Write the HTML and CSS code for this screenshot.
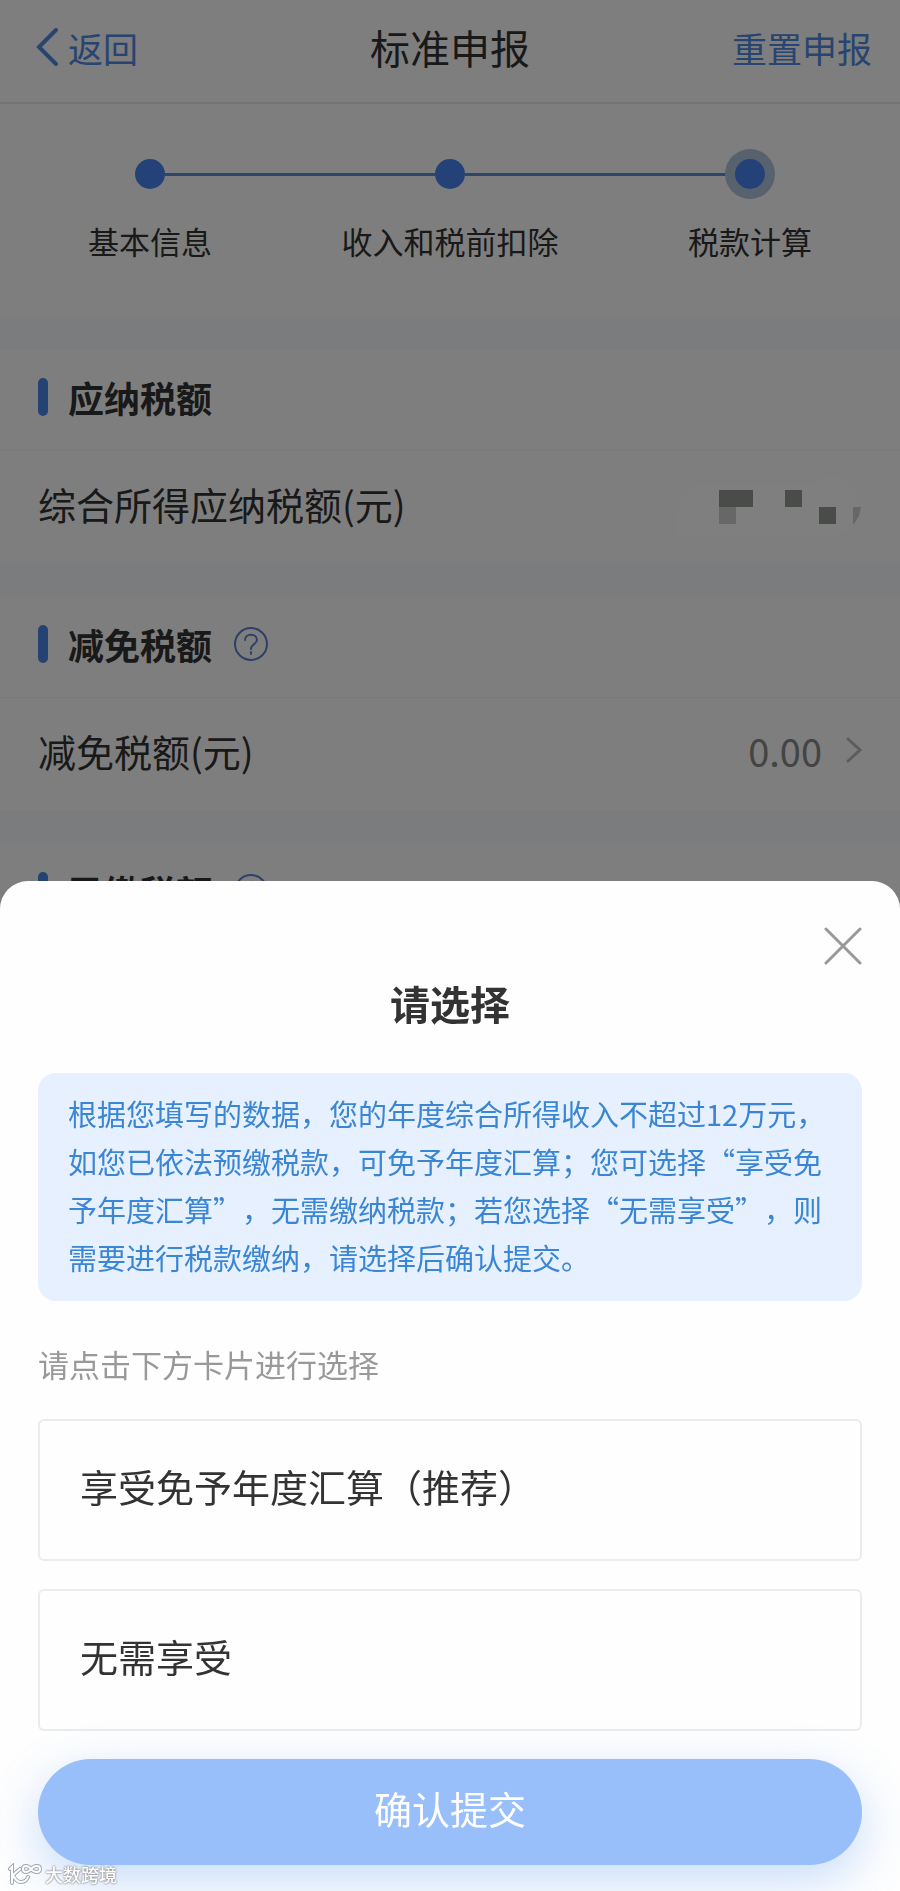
FILE: index.html
```html
<!DOCTYPE html>
<html lang="zh-CN">
<head>
    <meta charset="UTF-8">
    <meta name="viewport" content="width=device-width, initial-scale=1.0">
    <title>标准申报</title>
    <link rel="stylesheet" href="styles.css">
</head>
<body>

    <div class="page">
        <header class="navbar">
            <a class="nav-link" href="#">
                <svg class="back-icon" viewBox="0 0 22 38" aria-hidden="true"><path d="M20 2 L3 19 L20 36"/></svg>
                返回
            </a>
            <h1>标准申报</h1>
            <a class="nav-link nav-right" href="#">重置申报</a>
        </header>

        <ol class="steps">
            <li class="step">
                <div class="track"><i class="line hidden"></i><i class="dot"></i><i class="line"></i></div>
                <span>基本信息</span>
            </li>
            <li class="step">
                <div class="track"><i class="line"></i><i class="dot"></i><i class="line"></i></div>
                <span>收入和税前扣除</span>
            </li>
            <li class="step">
                <div class="track"><i class="line"></i><i class="dot current"></i><i class="line hidden"></i></div>
                <span>税款计算</span>
            </li>
        </ol>

        <section class="panel">
            <h2>应纳税额</h2>
            <div class="row">
                <span>综合所得应纳税额(元)</span>
                <svg class="mosaic" viewBox="0 0 187 74" role="img" aria-label="金额已隐藏">
                    <path class="smudge" d="M6 32 Q14 18 40 18 H140 Q145 10 165 12 Q182 18 182 40 Q178 70 150 70 H0 Z"/>
                    <path class="dark" d="M44 24h34v17h-34z M110 24h17v17h-17z M144 41h17v17h-17z"/>
                    <path class="light" d="M44 41h17v17h-17z M178 41h8l-2 9-5 8h-1z"/>
                </svg>
            </div>
        </section>

        <section class="panel">
            <h2>减免税额
                <button class="help" type="button" aria-label="减免税额说明">
                    <svg viewBox="0 0 34 34"><circle cx="17" cy="17" r="16"/><path d="M11 13 C11 6 23 6 23 13 C23 17 17 17 17 22"/><path d="M17 25 V27"/></svg>
                </button>
            </h2>
            <a class="row" href="#">
                <span>减免税额(元)</span>
                <span class="value">0.00
                    <svg class="arrow" viewBox="0 0 16 26" aria-hidden="true"><path d="M2 2 L14 13 L2 24"/></svg>
                </span>
            </a>
        </section>

        <section class="panel">
            <h2>已缴税额
                <button class="help" type="button" aria-label="已缴税额说明">
                    <svg viewBox="0 0 34 34"><circle cx="17" cy="17" r="16"/><path d="M11 13 C11 6 23 6 23 13 C23 17 17 17 17 22"/><path d="M17 25 V27"/></svg>
                </button>
            </h2>
        </section>
    </div>

    <div class="mask">
        <div class="sheet" role="dialog" aria-labelledby="sheetTitle">
            <button class="close" type="button" aria-label="关闭">
                <svg viewBox="0 0 38 38"><path d="M2 2 L36 36 M36 2 L2 36"/></svg>
            </button>
            <h2 class="sheet-title" id="sheetTitle">请选择</h2>
            <p class="notice">根据您填写的数据，您的年度综合所得收入不超过12万元，如您已依法预缴税款，可免予年度汇算；您可选择“享受免予年度汇算”，无需缴纳税款；若您选择“无需享受”，则需要进行税款缴纳，请选择后确认提交。</p>
            <p class="hint">请点击下方卡片进行选择</p>
            <button class="card" type="button">享受免予年度汇算（推荐）</button>
            <button class="card" type="button">无需享受</button>
            <button class="submit" type="button">确认提交</button>
        </div>
    </div>

    <div class="watermark">
        <svg viewBox="0 0 34 22" aria-hidden="true">
            <path class="edge" d="M2 6 L4 4 V20 M12 6 L5 12 Q8 19 13 19 Q18 19 20 14"/>
            <path class="edge" d="M23 6 C20 2 15 2 15 6 C15 10 20 10 23 6 C26 2 32 2 32 6 C32 10 26 10 23 6"/>
            <path d="M2 6 L4 4 V20 M12 6 L5 12 Q8 19 13 19 Q18 19 20 14"/>
            <path d="M23 6 C20 2 15 2 15 6 C15 10 20 10 23 6 C26 2 32 2 32 6 C32 10 26 10 23 6"/>
        </svg>
        <span>大数跨境</span>
    </div>

</body>
</html>
```
FILE: styles.css
```css
* {
    margin: 0;
    padding: 0;
    box-sizing: border-box;
}

body {
    background: #f4f8fa;
    color: #333;
    font-family: "Noto Sans CJK SC", "Noto Sans", sans-serif;
    font-size: 38px;
    min-height: 100vh;
}

a {
    color: inherit;
    text-decoration: none;
}

button {
    font: inherit;
    color: inherit;
    background: none;
    border: none;
    cursor: pointer;
}

svg {
    display: block;
    fill: none;
    stroke-linecap: round;
}

/* page behind the sheet */
.navbar {
    display: grid;
    grid-template-columns: 1fr auto 1fr;
    align-items: center;
    height: 104px;
    padding-bottom: 8px;
    background: #fdfdfd;
    border-bottom: 2px solid #e6e6e6;
}

.navbar h1 {
    font-size: 40px;
    font-weight: 400;
}

.nav-link {
    display: flex;
    align-items: center;
    gap: 10px;
    padding: 0 28px 0 36px;
    font-size: 35px;
    color: #5088e0;
}

.nav-right {
    justify-self: end;
}

.back-icon {
    width: 22px;
    height: 38px;
    stroke: #5088e0;
    stroke-width: 4;
}

.steps {
    display: grid;
    grid-template-columns: repeat(3, 1fr);
    padding: 46px 0 54px;
    background: #fdfdfd;
    list-style: none;
}

.step {
    text-align: center;
    font-size: 31px;
    line-height: 42px;
}

.track {
    display: flex;
    align-items: center;
    height: 48px;
    margin-bottom: 22px;
}

.line {
    flex: 1;
    height: 3px;
    background: #5c8cdc;
}

.line.hidden {
    background: none;
}

.dot {
    width: 30px;
    height: 30px;
    border-radius: 50%;
    background: #4884ee;
}

.dot.current {
    box-shadow: 0 0 0 10px #b0c4dc;
}

.panel {
    background: #fdfdfd;
    margin-bottom: 34px;
}

.steps + .panel {
    margin-top: 34px;
}

.panel h2 {
    display: flex;
    align-items: center;
    height: 101px;
    padding: 0 38px 6px;
    border-bottom: 1px solid #f2f2f2;
    font-size: 36px;
    font-weight: 700;
}

.panel h2::before {
    content: "";
    width: 10px;
    height: 38px;
    margin-right: 20px;
    border-radius: 5px;
    background: #4a86e4;
}

.help {
    margin-left: 22px;
}

.help svg {
    width: 34px;
    height: 34px;
    stroke: #5c80d0;
    stroke-width: 2;
}

.row {
    display: flex;
    align-items: center;
    justify-content: space-between;
    height: 112px;
    padding: 0 38px 8px;
}

.value {
    display: flex;
    align-items: center;
    gap: 24px;
    color: #888;
}

.arrow {
    width: 16px;
    height: 26px;
    stroke: #bbb;
    stroke-width: 3;
}

.mosaic {
    width: 187px;
    height: 74px;
}

.smudge {
    fill: #fff;
}

.dark {
    fill: #949892;
}

.light {
    fill: #cfcfcf;
}

/* bottom sheet */
.mask {
    position: fixed;
    inset: 0;
    display: flex;
    align-items: flex-end;
    background: rgba(0, 0, 0, 0.5);
}

.sheet {
    display: flex;
    flex-direction: column;
    width: 100%;
    padding: 46px 38px 26px;
    border-radius: 28px 28px 0 0;
    background: #fefefe;
    overflow: hidden;
}

.close {
    align-self: flex-end;
}

.close svg {
    width: 38px;
    height: 38px;
    stroke: #999;
    stroke-width: 3;
}

.sheet-title {
    margin: 8px 0 40px;
    text-align: center;
    font-size: 40px;
    font-weight: 700;
    line-height: 60px;
}

.notice {
    padding: 16px 30px 20px;
    border-radius: 18px;
    background: #e6f0ff;
    color: #3a86d4;
    font-size: 29px;
    line-height: 48px;
    text-spacing-trim: space-all;
}

.hint {
    margin: 40px 0 32px;
    color: #999;
    font-size: 31px;
    line-height: 46px;
}

.card {
    height: 142px;
    margin-bottom: 28px;
    padding: 0 40px 10px;
    border: 2px solid #eaebec;
    border-radius: 6px;
    text-align: left;
}

.submit {
    height: 106px;
    padding-bottom: 10px;
    border-radius: 53px;
    background: #98bffa;
    color: #fff;
    box-shadow: 0 16px 50px rgba(74, 144, 240, 0.3);
}

/* watermark over the page */
.watermark {
    position: fixed;
    left: 8px;
    bottom: 4px;
    display: flex;
    align-items: center;
    gap: 3px;
    color: #fff;
    font-size: 18px;
    font-weight: 500;
    line-height: 26px;
    text-shadow: 0 0 2px #888, 0 0 2px #888;
}

.watermark svg {
    width: 34px;
    height: 22px;
    stroke: #fff;
    stroke-width: 2;
}

.watermark .edge {
    stroke: #a0a8b4;
    stroke-width: 4;
}
```
